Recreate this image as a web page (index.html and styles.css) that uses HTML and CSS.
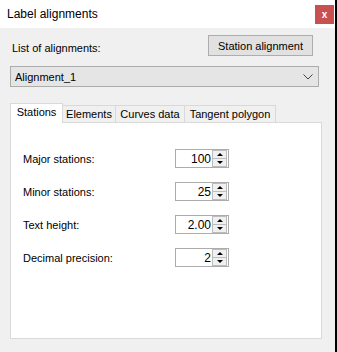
FILE: index.html
```html
<!DOCTYPE html>
<html>
<head>
<title>Label alignments</title>
<link rel="stylesheet" href="styles.css">
</head>
<body>

<div class="window">
  <div class="titlebar">
    <span class="title">Label alignments</span>
    <span class="close">x</span>
  </div>

  <div class="content">
    <div class="top-row">
      <span class="list-label">List of alignments:</span>
      <button class="btn">Station alignment</button>
    </div>

    <div class="combo">
      <span>Alignment_1</span>
      <svg width="10" height="6" viewBox="0 0 10 6"><path d="M0.5 0.5 L5 5 L9.5 0.5" fill="none" stroke="#444" stroke-width="1"/></svg>
    </div>

    <div class="tabs">
      <div class="tab active">Stations</div>
      <div class="tab tab-elements">Elements</div>
      <div class="tab tab-curves">Curves data</div>
      <div class="tab tab-tangent">Tangent polygon</div>
    </div>

    <div class="panel">
      <div class="field">
        <span class="field-label">Major stations:</span>
        <div class="spin"><span class="spin-value">100</span><div class="spin-btns"><span class="up"></span><span class="down"></span></div></div>
      </div>
      <div class="field">
        <span class="field-label">Minor stations:</span>
        <div class="spin"><span class="spin-value">25</span><div class="spin-btns"><span class="up"></span><span class="down"></span></div></div>
      </div>
      <div class="field">
        <span class="field-label">Text height:</span>
        <div class="spin"><span class="spin-value">2.00</span><div class="spin-btns"><span class="up"></span><span class="down"></span></div></div>
      </div>
      <div class="field">
        <span class="field-label">Decimal precision:</span>
        <div class="spin"><span class="spin-value">2</span><div class="spin-btns"><span class="up"></span><span class="down"></span></div></div>
      </div>
    </div>
  </div>
</div>

</body>
</html>
```

FILE: styles.css
```css
body {
  margin: 0;
  background-color: #000;
  font-family: "Liberation Sans", Arial, sans-serif;
  font-size: 11px;
  color: #000;
}

.window {
  width: 335px;
  height: 352px;
  background-color: #f0f0f0;
}

.titlebar {
  height: 28px;
  background-color: #fff;
  display: flex;
  align-items: center;
  justify-content: space-between;
}

.title {
  font-size: 12px;
  padding-left: 7px;
  padding-bottom: 1px;
}

.close {
  width: 19px;
  height: 19px;
  margin-right: 1px;
  margin-top: 1px;
  background-color: #c75050;
  color: #fff;
  font-weight: bold;
  font-size: 10px;
  display: flex;
  align-items: center;
  justify-content: center;
}

.content {
  padding: 7px 13px 0 10px;
}

.top-row {
  display: flex;
  justify-content: space-between;
  align-items: center;
  padding-right: 9px;
}

.list-label {
  padding-left: 2px;
  padding-top: 4px;
}

.btn {
  width: 105px;
  height: 21px;
  background-color: #e1e1e1;
  border: 1px solid #adadad;
  font-family: inherit;
  font-size: 11px;
  padding: 0;
  margin: 0;
}

.combo {
  margin-top: 10px;
  width: 309px;
  height: 21px;
  box-sizing: border-box;
  background-color: #e5e5e5;
  border: 1px solid #acacac;
  display: flex;
  align-items: center;
  justify-content: space-between;
  padding: 0 5px 0 4px;
}

.tabs {
  margin-top: 15px;
  display: flex;
  align-items: flex-end;
  height: 20px;
}

.tab {
  height: 17px;
  box-sizing: border-box;
  border: 1px solid #d9d9d9;
  border-bottom: none;
  border-left: none;
  background-color: #f0f0f0;
  padding-top: 2px;
  text-align: center;
}

.tab-elements {
  width: 53px;
}

.tab-curves {
  width: 69px;
}

.tab-tangent {
  width: 91px;
}

.tab.active {
  height: 20px;
  width: 53px;
  border-left: 1px solid #d9d9d9;
  background-color: #fff;
  padding-top: 2px;
  position: relative;
  top: 1px;
}

.panel {
  width: 312px;
  height: 217px;
  box-sizing: border-box;
  background-color: #fff;
  border: 1px solid #d9d9d9;
  padding: 26px 0 0 12px;
}

.field {
  display: flex;
  align-items: center;
  height: 19px;
  margin-bottom: 14px;
}

.field-label {
  width: 152px;
}

.spin {
  width: 54px;
  height: 19px;
  box-sizing: border-box;
  border: 1px solid #acacac;
  display: flex;
  align-items: center;
  justify-content: flex-end;
}

.spin-value {
  font-size: 12px;
  padding-right: 1px;
}

.spin-btns {
  display: flex;
  flex-direction: column;
  width: 15px;
  height: 17px;
  margin-right: 1px;
}

.spin-btns span {
  flex: 1;
  background-color: #f0f0f0;
  border: 1px solid #bcbcbc;
  position: relative;
}

.spin-btns .down {
  border-top: none;
}

.spin-btns span::after {
  content: "";
  position: absolute;
  left: 4px;
  border-left: 3px solid transparent;
  border-right: 3px solid transparent;
}

.spin-btns .up::after {
  top: 2px;
  border-bottom: 3px solid #000;
}

.spin-btns .down::after {
  top: 2px;
  border-top: 3px solid #000;
}
```
